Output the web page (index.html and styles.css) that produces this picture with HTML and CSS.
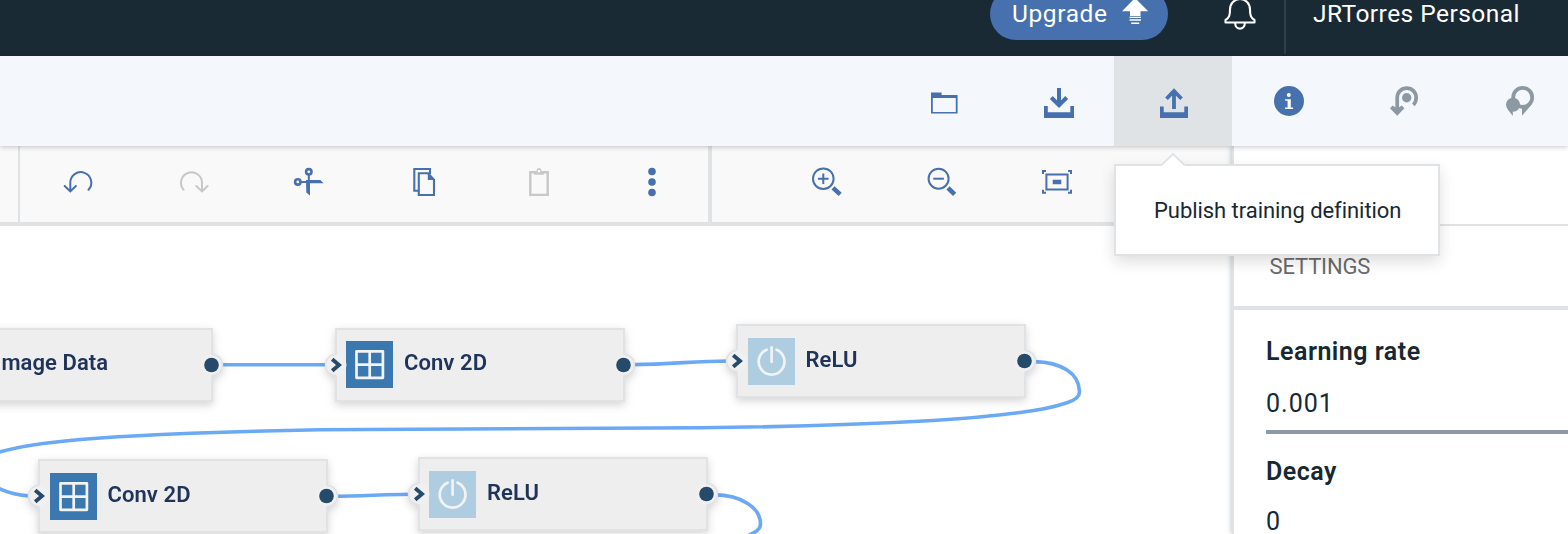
FILE: index.html
```html
<!DOCTYPE html>
<html lang="en">
<head>
<meta charset="utf-8">
<title>Flow editor</title>
<link rel="stylesheet" href="styles.css">
</head>
<body>
<svg class="defs" aria-hidden="true">
  <symbol id="grid-icon" viewBox="0 0 47 47"><path d="M10.5 10.4h26.4v26.4H10.5zM23.7 10.4v26.4M10.5 23.6h26.4" fill="none" stroke="#f1f3f5" stroke-width="2.7" stroke-linejoin="round"/></symbol>
  <symbol id="power-icon" viewBox="0 0 47 47"><path d="M18.7 11.7a12.9 12.9 0 1 0 9.8 0M23.6 9.3v14.5" fill="none" stroke="#f1f3f5" stroke-width="2.7" stroke-linecap="round"/></symbol>
  <symbol id="port-in" viewBox="0 0 24 24"><circle cx="12" cy="12" r="10.5" fill="#f0f0f0"/><path d="M12 1.5a10.5 10.5 0 0 0 0 21" fill="none" stroke="#dfe3e6" stroke-width="1.5"/><path d="M8.200 6.300l6.800 5.700-6.800 5.700" fill="none" stroke="#264a69" stroke-width="3.8"/></symbol>
  <symbol id="port-out" viewBox="0 0 24 24"><circle cx="12" cy="12" r="10.5" fill="#f0f0f0"/><path d="M12 1.5a10.5 10.5 0 0 1 0 21" fill="none" stroke="#dfe3e6" stroke-width="1.5"/><circle cx="11.5" cy="12" r="7.3" fill="#264a69"/></symbol>
</svg>

<header class="topbar">
  <div class="topbar-row">
    <button class="upgrade"><span class="upgrade-label">Upgrade</span>
      <svg width="28" height="28" viewBox="0 0 28 28"><path d="M14 0L27.200 13.200h-7.700V18H9v-4.800H1z" fill="#fff"/><path d="M8.500 19.400h11.500M8.500 22h11.500M10.200 25.200h8" stroke="#fff" stroke-width="1.400"/></svg>
    </button>
    <svg class="bell" width="34" height="34" viewBox="0 0 34 34"><path d="M7 16.500a10 10.500 0 0 1 20 0C27 22 27.500 24.500 31.500 27v2.500h-29V27C6.500 24.500 7 22 7 16.500zM12.200 30.500c0 6.800 9.600 6.800 9.600 0" fill="none" stroke="#fff" stroke-width="2.100" stroke-linejoin="round"/></svg>
    <div class="account"><span class="account-name">JRTorres Personal</span></div>
  </div>
</header>

<nav class="actions">
  <span></span>
  <div class="action"><svg class="icon" viewBox="0 0 32 32"><path d="M3 7.500h10.600V10h16v18.500H3zM4.800 12.900v14h23v-14z" fill="#4770ae" fill-rule="evenodd"/></svg></div>
  <div class="action"><svg class="icon" viewBox="0 0 32 32"><path d="M2 21h3.800v6.200h22.500V21H32v12H2z" fill="#4770ae"/><path d="M17 3v17M9.300 12.500l7.700 7.700 7.700-7.700" fill="none" stroke="#4770ae" stroke-width="4"/></svg></div>
  <div class="action action-active"><svg class="icon" viewBox="0 0 32 32"><path d="M3 21.500h3.700v5.700h20.600v-5.700H31V33H3z" fill="#4770ae"/><path d="M17 24V6M9.500 13.800L17 6l7.500 7.800" fill="none" stroke="#4770ae" stroke-width="3.800"/></svg></div>
  <div class="action"><svg class="icon" viewBox="0 0 32 32"><circle cx="16" cy="16" r="15" fill="#4770ae"/><circle cx="15.800" cy="10" r="2" fill="#fff"/><path d="M12.200 14.200h5.600v8.200h2.300V24h-8v-1.600h2.500v-6.600h-2.400z" fill="#fff"/></svg></div>
  <div class="action"><svg class="icon" viewBox="0 0 32 32"><path d="M9.200 24V12.600a9.500 9.500 0 0 1 19 0c0 3-1 5.500-2.800 7.200" fill="none" stroke="#8c99a2" stroke-width="3.700"/><path d="M2 23.200l2.600-2.600 4.600 2.800 4.600-2.800 2.600 2.600-7.200 7.600z" fill="#8c99a2"/><circle cx="18.700" cy="12.800" r="4.700" fill="#8c99a2"/></svg></div>
  <div class="action action-last"><svg class="icon" viewBox="0 0 32 32"><circle cx="19.700" cy="12.400" r="9.500" fill="none" stroke="#8c99a2" stroke-width="3.700"/><path d="M19 22.500v8.300L29 19z" fill="#8c99a2"/><circle cx="10" cy="19.700" r="7" fill="#8c99a2"/><path d="M4.500 24l5.300 6.900V25z" fill="#8c99a2"/></svg></div>
  <div class="tooltip">Publish training definition
    <svg class="tooltip-caret" width="26" height="13" viewBox="0 0 26 13"><path d="M1.500 12L13 1l11.500 11v1h-23z" fill="#fff"/><path d="M1.500 12L13 1l11.500 11" fill="none" stroke="#dfe3e6" stroke-width="1.800"/></svg>
  </div>
</nav>

<div class="workspace">
  <main class="editor">
    <div class="tools">
      <div class="tool-stub"></div>
      <div class="tool-group edit-tools">
        <div class="tool"><svg class="icon line" viewBox="0 0 32 32"><path d="M8.300 23.200V15a10.500 10.500 0 1 1 18.200 6.800M2.700 18l5.600 5.400L13.900 18"/></svg></div>
        <div class="tool"><svg class="icon line muted" viewBox="0 0 32 32"><path d="M25 23.200V15A10.500 10.500 0 1 0 6.600 21.800M19.300 18l5.700 5.400 5.600-5.400"/></svg></div>
        <div class="tool"><svg class="icon" viewBox="0 0 32 32"><path d="M16.800 7v7M9 13.900h7" stroke="#4770ae" stroke-width="2"/><g fill="none" stroke="#4770ae" stroke-width="2.600"><circle cx="16.800" cy="3.800" r="2.700"/><circle cx="5.800" cy="13.900" r="2.700"/></g><path d="M14 12h14.300l3.300 3.300H18v12.200l-3.700-3z" fill="#4770ae"/></svg></div>
        <div class="tool"><svg class="icon" viewBox="0 0 32 32"><path d="M11 22.700H7.300V1H23v5M11.800 5.300H21l6 6.700v15H11.800z" fill="none" stroke="#4770ae" stroke-width="2.100"/><path d="M20.800 4.300L28 11.500v.5h-7.200z" fill="#4770ae"/></svg></div>
        <div class="tool"><svg class="icon" viewBox="0 0 32 32"><path d="M8.300 4.200h17.400v22.700H8.300z" fill="none" stroke="#c7c7c7" stroke-width="2.400"/><path d="M12.200 6.700V4.500L14.500 3Q15 0 17 0t2.500 3l2.300 1.500v2.200z" fill="#c7c7c7"/><circle cx="17" cy="3.200" r="1.200" fill="#fff"/></svg></div>
        <div class="tool"><svg class="icon" viewBox="0 0 32 32" fill="#4770ae"><circle cx="15" cy="3.500" r="3.800"/><circle cx="15" cy="14" r="3.800"/><circle cx="15" cy="24.500" r="3.800"/></svg></div>
      </div>
      <div class="tool-group zoom-tools">
        <div class="tool"><svg class="icon" viewBox="0 0 32 32" fill="none" stroke="#4770ae" stroke-width="2"><circle cx="12.300" cy="10.700" r="10.300"/><path d="M7 10.700h10.600M12.300 5.400V16"/><path d="M22 19.800l7.200 6.500" stroke-width="4.500"/></svg></div>
        <div class="tool"><svg class="icon" viewBox="0 0 32 32" fill="none" stroke="#4770ae" stroke-width="2"><circle cx="12.600" cy="10.700" r="10"/><path d="M7.300 10.700h10.600"/><path d="M22 19.800l6.600 6.500" stroke-width="4.500"/></svg></div>
        <div class="tool"><svg class="icon" viewBox="0 0 32 32" fill="none" stroke="#4770ae" stroke-width="2"><path d="M5.400 6.600h21.200v15H5.400z"/><path d="M2 6V3h3M27 3h3v3M30 21.700v3h-3M5 24.700H2v-3"/><path d="M11.700 11.700h8.600v4.600h-8.600z" fill="#4770ae" stroke="none"/></svg></div>
      </div>
    </div>

    <div class="canvas">
      <svg class="links" width="1232" height="308" viewBox="0 226 1232 308">
        <path d="M220 364.700H330"/>
        <path d="M630 364.700C680 364 690 361 730 361"/>
        <path d="M1034 361.600C1062 362 1079 374 1079.400 391C1080 396 1077 399.500 1067 402.800C1053 407.500 1037 410.500 1020 412.500C993 416 965 418.700 933 420.500C855 425 780 427 700 427.700C570 428.500 440 428.500 320 429.800C255 431 190 433 133 436C95 438 60 441 33 445C20 447 8 449.500 -2 452.500"/>
        <path d="M-2 488C8 493 18 495 30 496"/>
        <path d="M334 496.200C360 496 390 494.300 412 494.300"/>
        <path d="M714 494.600C742 495 760.500 508 760.500 524C760.500 529 757 532 749 535"/>
      </svg>
      <div class="node node-image"><span class="node-label">Image Data</span><svg class="port port-out"><use href="#port-out"/></svg></div>
      <div class="node node-conv-1"><svg class="port port-in"><use href="#port-in"/></svg><svg class="node-icon conv"><use href="#grid-icon"/></svg><span class="node-label">Conv 2D</span><svg class="port port-out"><use href="#port-out"/></svg></div>
      <div class="node node-relu-1"><svg class="port port-in"><use href="#port-in"/></svg><svg class="node-icon relu"><use href="#power-icon"/></svg><span class="node-label">ReLU</span><svg class="port port-out"><use href="#port-out"/></svg></div>
      <div class="node node-conv-2"><svg class="port port-in"><use href="#port-in"/></svg><svg class="node-icon conv"><use href="#grid-icon"/></svg><span class="node-label">Conv 2D</span><svg class="port port-out"><use href="#port-out"/></svg></div>
      <div class="node node-relu-2"><svg class="port port-in"><use href="#port-in"/></svg><svg class="node-icon relu"><use href="#power-icon"/></svg><span class="node-label">ReLU</span><svg class="port port-out"><use href="#port-out"/></svg></div>
    </div>
  </main>

  <aside class="panel">
    <div class="panel-top"></div>
    <div class="panel-heading"><span>SETTINGS</span></div>
    <div class="fields">
      <div class="field-label">Learning rate</div>
      <div class="field-value">0.001</div>
      <div class="field-label decay">Decay</div>
      <div class="field-value second">0</div>
    </div>
  </aside>
</div>
</body>
</html>
```

FILE: styles.css
```css
* { box-sizing: border-box; }
body {
  margin: 0;
  width: 1568px;
  height: 534px;
  overflow: hidden;
  display: flex;
  flex-direction: column;
  background: #fff;
  color: #182832;
  font-family: Roboto, "Liberation Sans", sans-serif;
}
.defs { display: none; }
.icon { width: 32px; height: 32px; overflow: visible; display: block; flex: none; }
.line { fill: none; stroke: #4770ae; stroke-width: 2; stroke-linecap: round; }
.muted { stroke: #c7c7c7; }

.topbar { flex: none; height: 56px; background: #1a2a34; overflow: hidden; }
.topbar-row { display: flex; align-items: center; height: 84px; margin-top: -28px; padding-left: 990px; color: #fff; }
.upgrade {
  display: flex; align-items: center; justify-content: space-between;
  width: 178px; height: 52px; padding: 0 19px 0 22px;
  border: 0; border-radius: 26px; background: #4770ae; color: #fff;
  font: 400 24.5px Roboto, sans-serif; letter-spacing: 0.6px;
}
.upgrade-label { margin-top: -2px; }
.upgrade svg { margin-top: -4px; flex: none; }
.bell { margin: -8px 0 0 55px; overflow: visible; }
.account { display: flex; align-items: center; height: 82px; margin: -2px 0 0 27px; padding-left: 27px; border-left: 2px solid #2f3e49; font-size: 24.5px; letter-spacing: 0.45px; white-space: nowrap; }

.actions {
  position: relative; z-index: 3; flex: none;
  display: grid; grid-template-columns: 1fr 116px 112px 118px 114px 116px 106px;
  height: 90px; background: #f4f7fc; box-shadow: 0 1px 5px rgba(0,0,0,.22);
}
.action { display: flex; align-items: center; justify-content: center; }
.action-active { background: #dfe3e6; }
.action-last { padding-left: 8px; }
.tooltip {
  position: absolute; left: 1114px; top: 108px; width: 326px; height: 92px;
  display: flex; align-items: center; padding-left: 38px;
  border: 2px solid #dfe3e6; background: #fff; box-shadow: 0 6px 14px rgba(0,0,0,.13);
  font-size: 22px; letter-spacing: -0.05px; white-space: nowrap;
}
.tooltip-caret { position: absolute; left: 44px; top: -13px; }

.workspace { display: flex; flex: 1; min-height: 0; }
.editor { display: flex; flex-direction: column; width: 1232px; flex: none; }
.tools { display: flex; flex: none; height: 80px; background: #f9f9f9; border-bottom: 4px solid #dfe3e6; }
.tool-stub { width: 20px; border-right: 2px solid #dfe3e6; }
.tool-group { display: flex; align-items: center; }
.tool { display: flex; justify-content: center; width: 115px; flex: none; }
.edit-tools { width: 692px; padding-left: .5px; border-right: 4px solid #dfe3e6; }
.zoom-tools { padding-left: 57.5px; }

.canvas { position: relative; flex: 1; overflow: hidden; }
.links { position: absolute; left: 0; top: 0; fill: none; stroke: #6ba9f5; stroke-width: 3.6; }
.node {
  position: absolute; display: flex; align-items: center;
  width: 290px; height: 74px; padding: 1px 0 0 9.5px;
  border: 2px solid #dfe3e6; background: #eee;
  filter: drop-shadow(0 3px 4px rgba(0,0,0,.17));
}
.node-image { left: -77px; top: 102px; padding: 0 0 1px 70px; }
.node-conv-1 { left: 335px; top: 102px; padding: 0 0 1px 9px; }
.node-relu-1 { left: 736px; top: 98px; }
.node-conv-2 { left: 38px; top: 233px; }
.node-relu-2 { left: 418px; top: 231px; padding-left: 9px; }
.node-icon { width: 47px; height: 47px; flex: none; margin-right: 11px; }
.conv { background: #3b78b0; }
.relu { background: #afcde1; }
.node-label { margin-top: -4px; color: #20345a; font-size: 22px; font-weight: 600; letter-spacing: .08px; white-space: nowrap; }
.port { position: absolute; width: 24px; height: 24px; top: 22.7px; }
.port-in { left: -13px; }
.port-out { right: -13px; }

.panel { position: relative; z-index: 2; flex: 1; background: #fff; border-left: 2px solid #dfe3e6; box-shadow: -1px 0 5px rgba(60,80,100,.3); }
.panel-top { height: 80px; border-bottom: 2px solid #dfe3e6; }
.panel-heading { display: flex; align-items: center; height: 84px; padding-left: 35.5px; border-bottom: 4px solid #dfe3e6; color: #6a6a6a; font-size: 22px; letter-spacing: -.15px; }
.fields { padding-left: 32px; display: flex; flex-direction: column; }
.field-label { height: 64px; padding-top: 25px; font-size: 25px; line-height: 34px; font-weight: 600; letter-spacing: .5px; }
.field-value { height: 60px; padding-top: 13px; font-size: 25px; line-height: 34px; letter-spacing: 1px; border-bottom: 4px solid #8d9ba7; }
.decay { padding-top: 21px; }
.second { padding-top: 7px; }
```
